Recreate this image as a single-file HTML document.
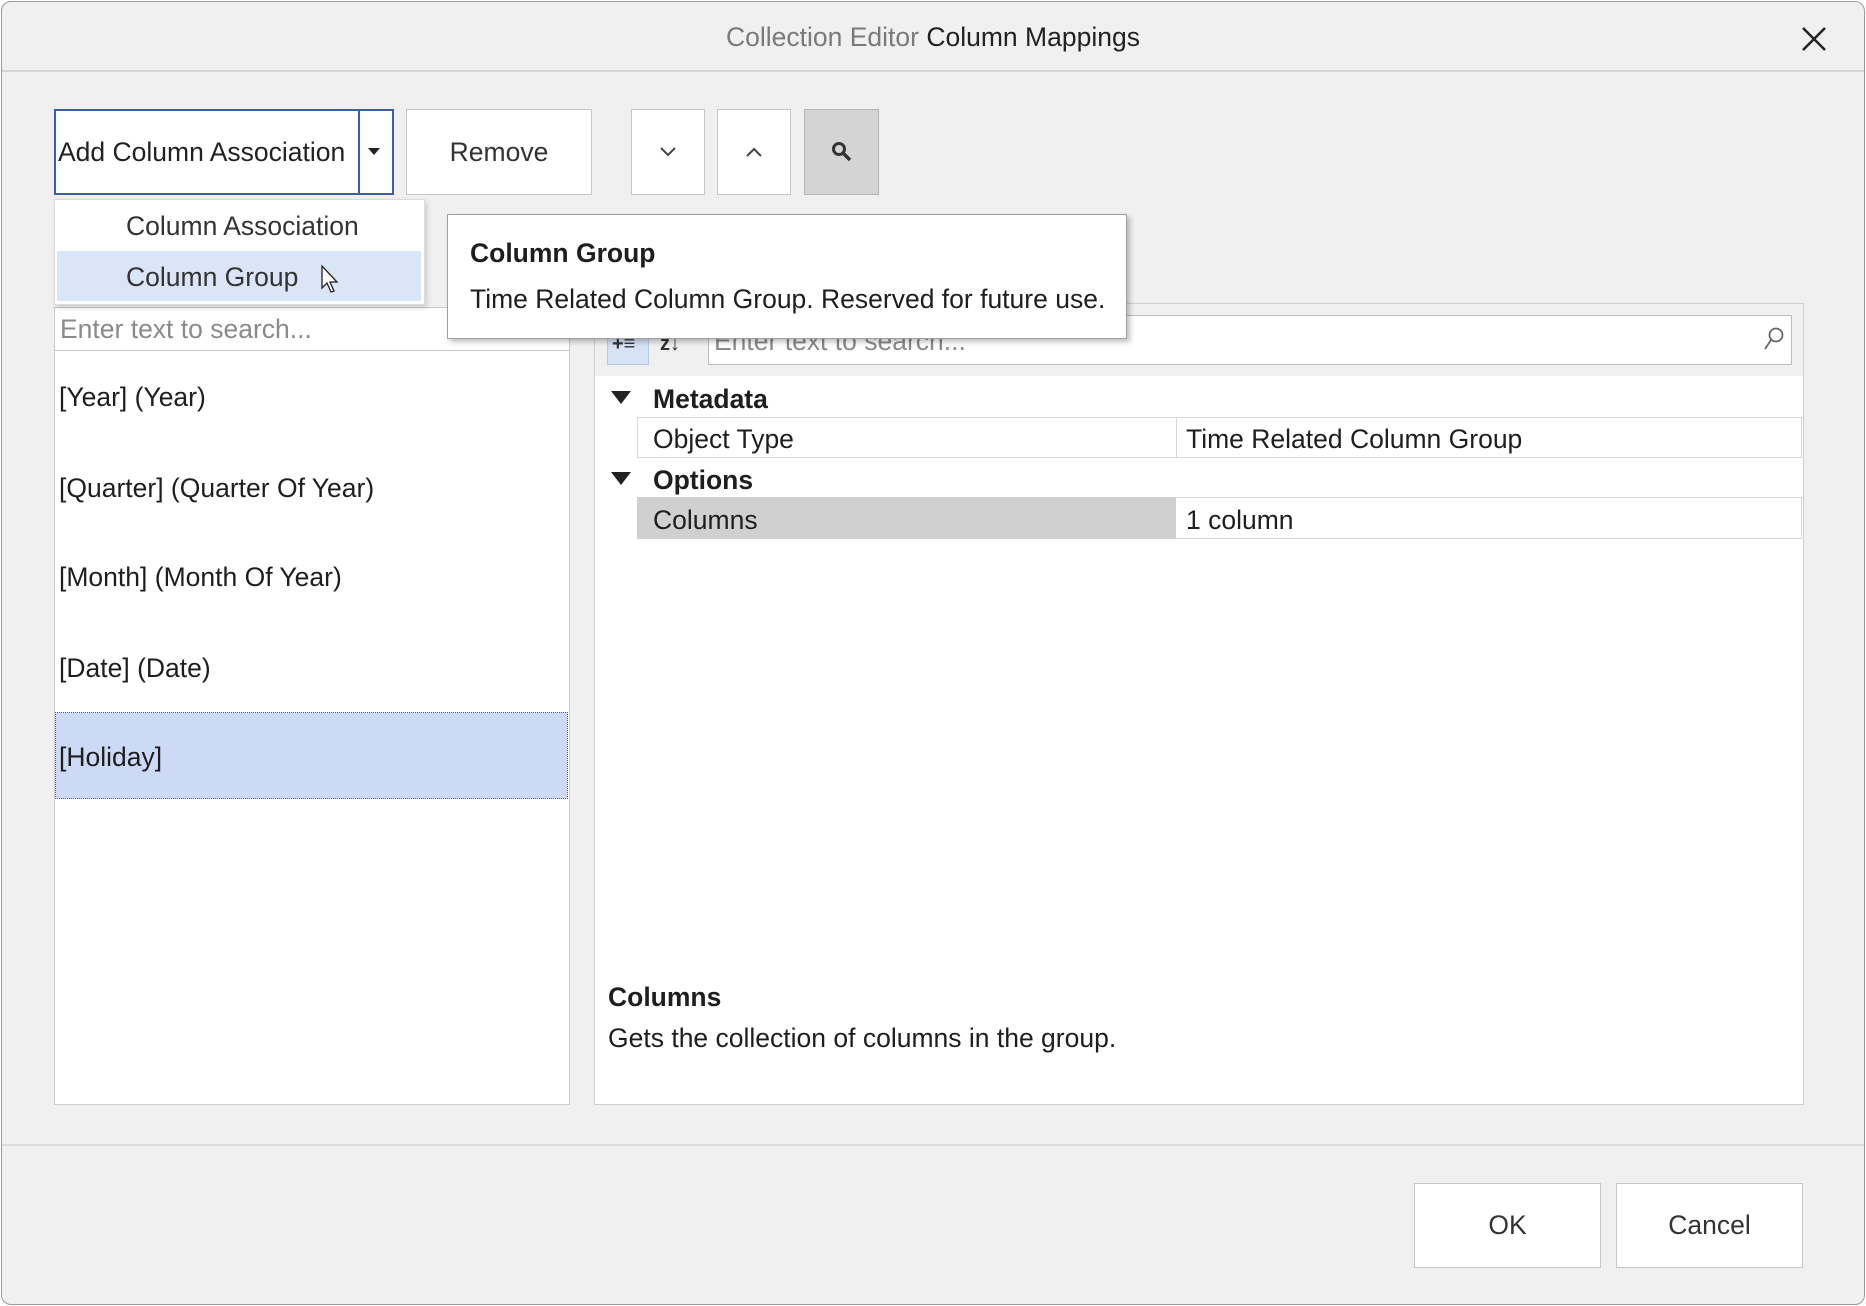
<!DOCTYPE html>
<html><head><meta charset="utf-8"><style>
*{box-sizing:border-box;margin:0;padding:0}
body{width:1866px;height:1306px;background:#fff;font-family:"Liberation Sans",sans-serif;color:#1e1e1e;position:relative;overflow:hidden}
.win{position:absolute;left:1px;top:1px;width:1864px;height:1304px;background:#f0f0f0;border:1px solid #9a9a9a;border-radius:10px}
.a{position:absolute}
.btn{position:absolute;background:#fff;border:1px solid #c6c6c6;display:flex;align-items:center;justify-content:center;font-size:26.5px;color:#333}
.t{position:absolute;font-size:26.5px;white-space:nowrap}
</style></head><body>
<div class="win"></div>
<div class="a" style="left:2px;top:70px;width:1862px;height:2px;background:#d6d6d6"></div>
<div class="t" style="left:0;width:1866px;text-align:center;top:22px;font-size:26.5px;color:#7a7a7a">Collection Editor <span style="color:#222">Column Mappings</span></div>
<svg class="a" style="left:1800px;top:25px" width="28" height="28"><path d="M3 3L25 25M25 3L3 25" stroke="#222" stroke-width="2.5"/></svg>

<div class="btn" style="left:54px;top:109px;width:340px;height:86px;border:2px solid #3e5f9a;justify-content:flex-start;padding-left:2px;color:#222">Add Column Association</div>
<div class="a" style="left:358px;top:111px;width:2px;height:82px;background:#3e5f9a"></div>
<svg class="a" style="left:367px;top:147px" width="14" height="10"><path d="M1 1h12L7 8z" fill="#222"/></svg>
<div class="btn" style="left:406px;top:109px;width:186px;height:86px">Remove</div>
<div class="btn" style="left:631px;top:109px;width:74px;height:86px"><svg width="18" height="12"><path d="M2 2l7 7 7-7" stroke="#444" stroke-width="2" fill="none"/></svg></div>
<div class="btn" style="left:717px;top:109px;width:74px;height:86px"><svg width="18" height="12"><path d="M2 10l7-7 7 7" stroke="#444" stroke-width="2" fill="none"/></svg></div>
<div class="btn" style="left:804px;top:109px;width:75px;height:86px;background:#d4d4d4;border-color:#b4b4b4"><svg width="22" height="22"><circle cx="8" cy="8" r="5.5" stroke="#333" stroke-width="3" fill="none"/><path d="M12 12l7 7" stroke="#333" stroke-width="3.5"/></svg></div>

<div class="a" style="left:54px;top:307px;width:516px;height:798px;background:#fff;border:1px solid #cfcfcf"></div>
<div class="a" style="left:54px;top:307px;width:516px;height:44px;border:1px solid #c9c9c9;background:#fff"></div>
<div class="t" style="left:60px;top:314px;color:#8a8a8a">Enter text to search...</div>
<div class="a" style="left:55px;top:712px;width:513px;height:87px;background:#ccdaf5;border:1px dotted #4a6ab0"></div>
<div class="t" style="left:59px;top:382px">[Year] (Year)</div>
<div class="t" style="left:59px;top:473px">[Quarter] (Quarter Of Year)</div>
<div class="t" style="left:59px;top:562px">[Month] (Month Of Year)</div>
<div class="t" style="left:59px;top:653px">[Date] (Date)</div>
<div class="t" style="left:59px;top:742px">[Holiday]</div>

<div class="a" style="left:594px;top:303px;width:1210px;height:802px;background:#fff;border:1px solid #cfcfcf"></div>
<div class="a" style="left:595px;top:304px;width:1208px;height:72px;background:#f0f0f0"></div>
<div class="a" style="left:607px;top:333px;width:42px;height:32px;background:#d6e2f5;border:1px solid #b8c8e4"></div>
<div class="t" style="left:612px;top:333px;font-size:20px;font-weight:bold;color:#333">+≡</div>
<div class="t" style="left:660px;top:333px;font-size:20px;font-weight:bold;color:#333">z↓</div>
<div class="a" style="left:708px;top:315px;width:1084px;height:50px;background:#fff;border:1px solid #bdbdbd"></div>
<div class="t" style="left:714px;top:326px;color:#8a8a8a">Enter text to search...</div>
<svg class="a" style="left:1763px;top:326px" width="22" height="26"><circle cx="13" cy="9" r="6.5" stroke="#666" stroke-width="1.8" fill="none"/><path d="M8 14l-6 9" stroke="#666" stroke-width="1.8"/></svg>
<svg class="a" style="left:610px;top:390px" width="22" height="16"><path d="M1 1h20L11 14z" fill="#222"/></svg>
<div class="t" style="left:653px;top:384px;font-weight:bold">Metadata</div>
<div class="a" style="left:637px;top:417px;width:1165px;height:41px;border:1px solid #d6d6d6"></div>
<div class="a" style="left:1176px;top:417px;width:1px;height:41px;background:#d6d6d6"></div>
<div class="t" style="left:653px;top:424px">Object Type</div>
<div class="t" style="left:1186px;top:424px">Time Related Column Group</div>
<svg class="a" style="left:610px;top:471px" width="22" height="16"><path d="M1 1h20L11 14z" fill="#222"/></svg>
<div class="t" style="left:653px;top:465px;font-weight:bold">Options</div>
<div class="a" style="left:637px;top:497px;width:1165px;height:42px;border:1px solid #d6d6d6"></div>
<div class="a" style="left:637px;top:497px;width:539px;height:42px;background:#d0d0d0"></div>
<div class="t" style="left:653px;top:505px">Columns</div>
<div class="t" style="left:1186px;top:505px">1 column</div>
<div class="t" style="left:608px;top:982px;font-weight:bold">Columns</div>
<div class="t" style="left:608px;top:1023px">Gets the collection of columns in the group.</div>

<div class="a" style="left:54px;top:199px;width:371px;height:106px;background:#fff;border:1px solid #dcdcdc;box-shadow:2px 3px 5px rgba(0,0,0,.15)"></div>
<div class="a" style="left:57px;top:251px;width:364px;height:50px;background:#dae6f8"></div>
<div class="t" style="left:126px;top:211px;color:#333">Column Association</div>
<div class="t" style="left:126px;top:262px;color:#333">Column Group</div>
<svg class="a" style="left:320px;top:264px" width="20" height="30"><path d="M2 2v22l5-5 4 9 3-1-4-9h7z" fill="#fff" stroke="#222" stroke-width="1.3"/></svg>

<div class="a" style="left:447px;top:214px;width:680px;height:125px;background:#fff;border:1px solid #a0a0a0;box-shadow:3px 3px 5px rgba(0,0,0,.25)"></div>
<div class="t" style="left:470px;top:238px;font-weight:bold">Column Group</div>
<div class="t" style="left:470px;top:284px">Time Related Column Group. Reserved for future use.</div>

<div class="a" style="left:2px;top:1144px;width:1862px;height:2px;background:#dcdcdc"></div>
<div class="btn" style="left:1414px;top:1183px;width:187px;height:85px">OK</div>
<div class="btn" style="left:1616px;top:1183px;width:187px;height:85px">Cancel</div>
</body></html>
